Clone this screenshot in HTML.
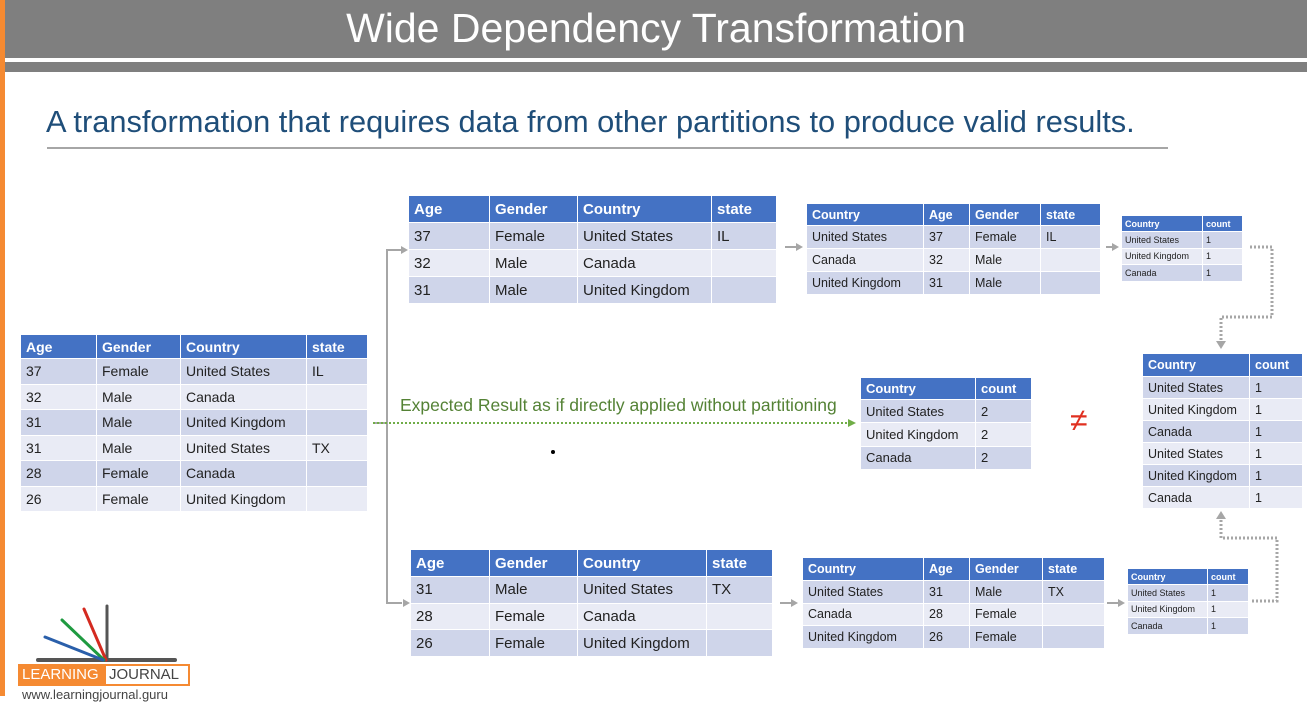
<!DOCTYPE html>
<html><head><meta charset="utf-8"><style>
*{margin:0;padding:0;box-sizing:border-box}
body{width:1307px;height:696px;overflow:hidden;background:#fff;position:relative;font-family:"Liberation Sans",sans-serif}
.a{position:absolute}
table{position:absolute;border-collapse:collapse;table-layout:fixed;color:#222}
td,th{border:1px solid #fff;text-align:left;font-weight:normal;padding:0 0 0 5px;white-space:nowrap;overflow:hidden}
th{background:#4472c4;color:#fff;font-weight:bold}
tr:nth-child(even) td{background:#cfd5ea}
tr:nth-child(odd) td{background:#e9ebf5}
</style></head><body>
<div class="a" style="left:0;top:0;width:5px;height:696px;background:#f58a32"></div>
<div class="a" style="left:5px;top:0;width:1302px;height:58px;background:#7f7f7f;color:#fff;font-size:41px;text-align:center;line-height:56px">Wide Dependency Transformation</div>
<div class="a" style="left:5px;top:62px;width:1302px;height:10px;background:#7f7f7f"></div>
<div class="a" style="left:46px;top:104px;color:#1f4e79;font-size:30.8px;white-space:nowrap">A transformation that requires data from other partitions to produce valid results.</div>
<div class="a" style="left:47px;top:147px;width:1121px;height:2px;background:#a6a6a6"></div>

<table style="left:20px;top:334px;width:347px;font-size:14px">
<col style="width:76px"><col style="width:84px"><col style="width:126px"><col style="width:61px">
<tr style="height:24px"><th>Age</th><th>Gender</th><th>Country</th><th>state</th></tr>
<tr style="height:25.5px"><td>37</td><td>Female</td><td>United States</td><td>IL</td></tr>
<tr style="height:25.5px"><td>32</td><td>Male</td><td>Canada</td><td></td></tr>
<tr style="height:25.5px"><td>31</td><td>Male</td><td>United Kingdom</td><td></td></tr>
<tr style="height:25.5px"><td>31</td><td>Male</td><td>United States</td><td>TX</td></tr>
<tr style="height:25.5px"><td>28</td><td>Female</td><td>Canada</td><td></td></tr>
<tr style="height:25.5px"><td>26</td><td>Female</td><td>United Kingdom</td><td></td></tr>
</table>

<table style="left:408px;top:195px;width:368px;font-size:15px">
<col style="width:81px"><col style="width:88px"><col style="width:134px"><col style="width:65px">
<tr style="height:27px"><th>Age</th><th>Gender</th><th>Country</th><th>state</th></tr>
<tr style="height:27px"><td>37</td><td>Female</td><td>United States</td><td>IL</td></tr>
<tr style="height:27px"><td>32</td><td>Male</td><td>Canada</td><td></td></tr>
<tr style="height:27px"><td>31</td><td>Male</td><td>United Kingdom</td><td></td></tr>
</table>

<table style="left:410px;top:549px;width:362px;font-size:15px">
<col style="width:79px"><col style="width:88px"><col style="width:129px"><col style="width:66px">
<tr style="height:27px"><th>Age</th><th>Gender</th><th>Country</th><th>state</th></tr>
<tr style="height:26.7px"><td>31</td><td>Male</td><td>United States</td><td>TX</td></tr>
<tr style="height:26.7px"><td>28</td><td>Female</td><td>Canada</td><td></td></tr>
<tr style="height:26.7px"><td>26</td><td>Female</td><td>United Kingdom</td><td></td></tr>
</table>

<table style="left:806px;top:203px;width:294px;font-size:12.5px">
<col style="width:117px"><col style="width:46px"><col style="width:71px"><col style="width:60px">
<tr style="height:22px"><th>Country</th><th>Age</th><th>Gender</th><th>state</th></tr>
<tr style="height:23px"><td>United States</td><td>37</td><td>Female</td><td>IL</td></tr>
<tr style="height:23px"><td>Canada</td><td>32</td><td>Male</td><td></td></tr>
<tr style="height:23px"><td>United Kingdom</td><td>31</td><td>Male</td><td></td></tr>
</table>

<table style="left:802px;top:557px;width:302px;font-size:12.5px">
<col style="width:121px"><col style="width:46px"><col style="width:73px"><col style="width:62px">
<tr style="height:23px"><th>Country</th><th>Age</th><th>Gender</th><th>state</th></tr>
<tr style="height:22.5px"><td>United States</td><td>31</td><td>Male</td><td>TX</td></tr>
<tr style="height:22.5px"><td>Canada</td><td>28</td><td>Female</td><td></td></tr>
<tr style="height:22.5px"><td>United Kingdom</td><td>26</td><td>Female</td><td></td></tr>
</table>

<table style="left:1121px;top:215px;width:121px;font-size:9px">
<col style="width:81px"><col style="width:40px">
<tr style="height:16px"><th style="padding-left:3px">Country</th><th style="padding-left:3px">count</th></tr>
<tr style="height:16.5px"><td style="padding-left:3px">United States</td><td style="padding-left:3px">1</td></tr>
<tr style="height:16.5px"><td style="padding-left:3px">United Kingdom</td><td style="padding-left:3px">1</td></tr>
<tr style="height:16.5px"><td style="padding-left:3px">Canada</td><td style="padding-left:3px">1</td></tr>
</table>
<table style="left:1127px;top:568px;width:121px;font-size:9px">
<col style="width:80px"><col style="width:41px">
<tr style="height:16px"><th style="padding-left:3px">Country</th><th style="padding-left:3px">count</th></tr>
<tr style="height:16.5px"><td style="padding-left:3px">United States</td><td style="padding-left:3px">1</td></tr>
<tr style="height:16.5px"><td style="padding-left:3px">United Kingdom</td><td style="padding-left:3px">1</td></tr>
<tr style="height:16.5px"><td style="padding-left:3px">Canada</td><td style="padding-left:3px">1</td></tr>
</table>

<table style="left:860px;top:377px;width:171px;font-size:13px">
<col style="width:115px"><col style="width:56px">
<tr style="height:22px"><th>Country</th><th>count</th></tr>
<tr style="height:23.3px"><td>United States</td><td>2</td></tr>
<tr style="height:23.3px"><td>United Kingdom</td><td>2</td></tr>
<tr style="height:23.3px"><td>Canada</td><td>2</td></tr>
</table>

<table style="left:1142px;top:353px;width:160px;font-size:12.5px">
<col style="width:107px"><col style="width:53px">
<tr style="height:23px"><th>Country</th><th>count</th></tr>
<tr style="height:22px"><td>United States</td><td>1</td></tr>
<tr style="height:22px"><td>United Kingdom</td><td>1</td></tr>
<tr style="height:22px"><td>Canada</td><td>1</td></tr>
<tr style="height:22px"><td>United States</td><td>1</td></tr>
<tr style="height:22px"><td>United Kingdom</td><td>1</td></tr>
<tr style="height:22px"><td>Canada</td><td>1</td></tr>
</table>

<div class="a" style="left:400px;top:395px;color:#548235;font-size:17.5px;white-space:nowrap">Expected Result as if directly applied without partitioning</div>
<div class="a" style="left:1070px;top:402px;color:#e03020;font-size:32px">≠</div>

<svg class="a" style="left:0;top:0" width="1307" height="696">
<g stroke="#a6a6a6" stroke-width="2" fill="none">
<path d="M373 423H387V250H402M387 423V603H402"/>
<path d="M785 247H798M1106 247H1114M780 603H793M1107 603H1119"/>
</g>
<g fill="#a6a6a6">
<path d="M408 250l-7-4v8z"/><path d="M410 603l-7-4v8z"/>
<path d="M803 247l-7-4v8z"/><path d="M1119 247l-7-4v8z"/>
<path d="M798 603l-7-4v8z"/><path d="M1125 603l-7-4v8z"/>
<path d="M1221 349l-5-8h10z"/><path d="M1221 511l-5 8h10z"/>
</g>
<g stroke="#a6a6a6" stroke-width="3" stroke-dasharray="2 2" fill="none">
<path d="M1250 247H1272V317H1221V340"/>
<path d="M1252 601H1277V538H1221V520"/>
</g>
<path d="M373 423H848" stroke="#70ad47" stroke-width="2" stroke-dasharray="2 2"/>
<path d="M856 423l-8-4v8z" fill="#70ad47"/>
<circle cx="553" cy="452" r="2" fill="#000"/>
<g stroke-width="3" stroke-linecap="round">
<path d="M107 606V660" stroke="#555"/>
<path d="M38 660H175" stroke="#555" stroke-width="4"/>
<path d="M84 609L106 660" stroke="#d42a20"/>
<path d="M62 620L104 660" stroke="#1f9a40"/>
<path d="M45 637L103 660" stroke="#2a5faa"/>
</g>
</svg>
<div class="a" style="left:18px;top:664px;width:172px;height:22px;border:2px solid #f58a32;font-size:15px;line-height:18px;background:#fff;white-space:nowrap;overflow:hidden">
<span style="display:inline-block;background:#f58a32;color:#fff;padding:0 2px;height:18px;width:86px">LEARNING</span><span style="color:#444;padding-left:3px">JOURNAL</span></div>
<div class="a" style="left:22px;top:687px;font-size:13px;color:#444;white-space:nowrap">www.learningjournal.guru</div>
</body></html>
